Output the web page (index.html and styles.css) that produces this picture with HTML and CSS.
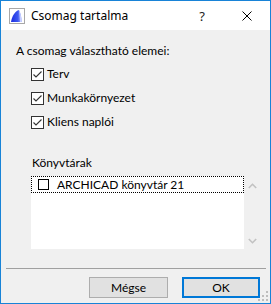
FILE: index.html
```html
<!DOCTYPE html>
<html>
<head>
<meta charset="utf-8">
<link rel="stylesheet" href="styles.css">
</head>
<body>
<div class="window">
  <div class="titlebar">
    <svg class="app-icon" width="16" height="16" viewBox="0 0 16 16">
      <defs>
        <linearGradient id="g" x1="0" y1="0" x2="1" y2="0">
          <stop offset="0" stop-color="#1c2de0"/>
          <stop offset="0.6" stop-color="#3a55f0"/>
          <stop offset="1" stop-color="#9aa8ff"/>
        </linearGradient>
      </defs>
      <rect x="0.5" y="0.5" width="15" height="15" fill="#fff" stroke="#a8a8a8"/>
      <path d="M2 14 C3 8 6 3 10 2 C11.5 5 12.5 9 12.8 14 Z" fill="url(#g)"/>
      <path d="M10 2 C11.5 5 12.5 9 12.8 14 L11 14 C10.8 9 10.4 5 10 2 Z" fill="#c8d0ff"/>
    </svg>
    <span class="title">Csomag tartalma</span>
    <span class="tb-btn help">?</span>
    <span class="tb-btn close">
      <svg width="10" height="10" viewBox="0 0 10 10"><path d="M0.5 0.5 L9.5 9.5 M9.5 0.5 L0.5 9.5" stroke="#000" stroke-width="1"/></svg>
    </span>
  </div>
  <div class="main">
    <div class="label">A csomag választható elemei:</div>
    <div class="checks">
      <div class="row"><span class="cb"><svg width="11" height="11" viewBox="0 0 11 11"><path d="M1.5 5.5 L4 8 L9.5 2.5" fill="none" stroke="#333" stroke-width="1.1"/></svg></span><span>Terv</span></div>
      <div class="row"><span class="cb"><svg width="11" height="11" viewBox="0 0 11 11"><path d="M1.5 5.5 L4 8 L9.5 2.5" fill="none" stroke="#333" stroke-width="1.1"/></svg></span><span>Munkakörnyezet</span></div>
      <div class="row"><span class="cb"><svg width="11" height="11" viewBox="0 0 11 11"><path d="M1.5 5.5 L4 8 L9.5 2.5" fill="none" stroke="#333" stroke-width="1.1"/></svg></span><span>Kliens naplói</span></div>
    </div>
    <div class="lib-label">Könyvtárak</div>
    <div class="listwrap">
      <div class="list">
        <div class="item"><span class="icb"></span><span>ARCHICAD könyvtár 21</span></div>
      </div>
      <div class="scroll">
        <svg width="9" height="6" viewBox="0 0 9 6"><path d="M0.8 5 L4.5 1.3 L8.2 5" fill="none" stroke="#c2c2c2" stroke-width="1.6"/></svg>
        <svg width="9" height="6" viewBox="0 0 9 6"><path d="M0.8 1 L4.5 4.7 L8.2 1" fill="none" stroke="#c2c2c2" stroke-width="1.6"/></svg>
      </div>
    </div>
  </div>
  <div class="sep"></div>
  <div class="buttons">
    <div class="btn">Mégse</div>
    <div class="btn default">OK</div>
  </div>
  <svg class="grip" width="10" height="10" viewBox="0 0 10 10" fill="#bdbdbd">
    <rect x="8" y="0" width="2" height="2"/>
    <rect x="4" y="4" width="2" height="2"/><rect x="8" y="4" width="2" height="2"/>
    <rect x="0" y="8" width="2" height="2"/><rect x="4" y="8" width="2" height="2"/><rect x="8" y="8" width="2" height="2"/>
  </svg>
</div>
</body>
</html>
```
FILE: styles.css
```css
html, body {
  margin: 0;
  padding: 0;
}
body {
  font-family: Lato, "Noto Sans", sans-serif;
  font-size: 12px;
  color: #000;
}
.window {
  position: relative;
  width: 271px;
  height: 304px;
  box-sizing: border-box;
  border: 1px solid #1883d7;
  background: #f0f0f0;
  display: flex;
  flex-direction: column;
}
.titlebar {
  height: 29px;
  background: #fff;
  display: flex;
  align-items: center;
  padding-left: 8px;
  flex-shrink: 0;
}
.app-icon {
  display: block;
  margin-top: 1px;
}
.title {
  margin-left: 6px;
  font-family: "Noto Sans", sans-serif;
  font-size: 12px;
  line-height: 16px;
  flex: 1;
}
.tb-btn {
  display: flex;
  align-items: center;
  justify-content: center;
  height: 29px;
}
.help {
  width: 44px;
  font-family: "Noto Sans", sans-serif;
  font-size: 13px;
  color: #222;
}
.close {
  width: 46px;
}
.main {
  padding: 13px 0 0 15px;
  flex: 1;
}
.label {
  line-height: 16px;
}
.checks {
  margin: 7px 0 0 15px;
  display: flex;
  flex-direction: column;
  gap: 8px;
}
.row {
  display: flex;
  align-items: center;
  height: 16px;
  line-height: 16px;
}
.cb {
  width: 11px;
  height: 11px;
  border: 1px solid #333;
  background: #fff;
  margin-right: 3px;
  display: block;
}
.cb svg {
  display: block;
}
.lib-label {
  margin: 25px 0 0 16px;
  line-height: 16px;
}
.listwrap {
  margin: 5px 0 0 15px;
  display: flex;
  height: 73px;
  width: 230px;
}
.list {
  width: 213px;
  background: #fff;
}
.item {
  height: 17px;
  box-sizing: border-box;
  border: 1px dotted #000;
  display: flex;
  align-items: center;
  padding-left: 6px;
  line-height: 15px;
}
.icb {
  width: 9px;
  height: 9px;
  border: 1px solid #000;
  margin-right: 8px;
  background: #fff;
}
.scroll {
  width: 17px;
  display: flex;
  flex-direction: column;
  align-items: center;
  justify-content: space-between;
  padding: 7px 0 5px;
  box-sizing: border-box;
}
.scroll svg {
  display: block;
}
.sep {
  height: 1px;
  background: #a0a0a0;
  margin: 0 4px 0 5px;
  flex-shrink: 0;
}
.buttons {
  display: flex;
  justify-content: flex-end;
  gap: 14px;
  padding: 8px 10px 0 0;
  height: 34px;
  box-sizing: border-box;
  flex-shrink: 0;
}
.btn {
  width: 79px;
  height: 21px;
  box-sizing: border-box;
  border: 1px solid #adadad;
  background: #e1e1e1;
  display: flex;
  align-items: center;
  justify-content: center;
  line-height: 16px;
}
.btn.default {
  width: 78px;
  border: 2px solid #0078d7;
}
.grip {
  position: absolute;
  right: 2px;
  bottom: 2px;
}
```
